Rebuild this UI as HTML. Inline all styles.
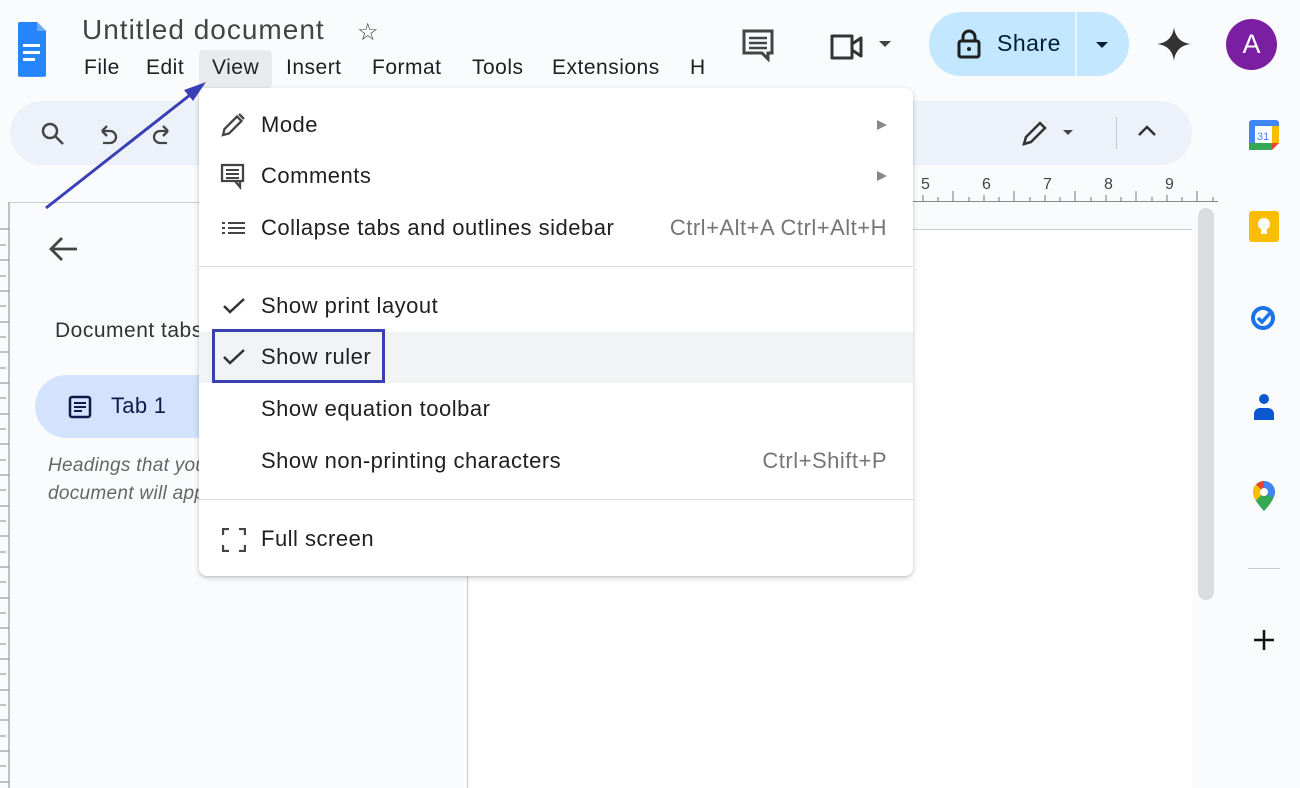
<!DOCTYPE html>
<html><head><meta charset="utf-8"><style>
*{box-sizing:border-box;margin:0;padding:0}
body{width:1300px;height:788px;overflow:hidden;background:#f9fbfd;font-family:"Liberation Sans",Arial,sans-serif;color:#1f1f1f;position:relative}
.a{position:absolute}
.menu span{position:absolute;top:56px;font-size:21px;color:#1f1f1f;letter-spacing:.5px}
.mi{position:absolute;left:261px;font-size:22px;letter-spacing:.5px;color:#1f1f1f}
.sc{position:absolute;right:413px;font-size:22px;letter-spacing:.5px;color:#757575}
</style></head><body>
<!-- docs logo -->
<svg class="a" style="left:17px;top:20px" width="30" height="58" viewBox="0 0 30 58"><path d="M3 2h17l9 9v45a2 2 0 0 1-2 2H3a2 2 0 0 1-2-2V4a2 2 0 0 1 2-2z" fill="#2684fc" transform="scale(1,0.98)"/><path d="M20 2v9h9z" fill="#6aa9fd"/><rect x="6" y="24" width="17" height="3" fill="#fff"/><rect x="6" y="31" width="17" height="3" fill="#fff"/><rect x="6" y="38" width="12" height="3" fill="#fff"/></svg>
<div class="a" style="left:82px;top:14px;font-size:28px;letter-spacing:1px;color:#444">Untitled document</div>
<div class="a" style="left:357px;top:18px;font-size:24px;color:#444">☆</div>
<div class="a" style="left:199px;top:50px;width:73px;height:38px;background:#e8eaed;border-radius:4px"></div>
<div class="menu"><span style="left:84px">File</span><span style="left:146px">Edit</span><span style="left:212px">View</span><span style="left:286px">Insert</span><span style="left:372px">Format</span><span style="left:472px">Tools</span><span style="left:552px">Extensions</span><span style="left:690px">H</span></div>
<!-- top right icons -->
<svg class="a" style="left:741px;top:28px" width="36" height="34" viewBox="0 0 36 34"><path d="M3 3h28v22h-4v6l-6-6H3z" fill="none" stroke="#444" stroke-width="3"/><path d="M8 10h18M8 15h18M8 20h18" stroke="#444" stroke-width="2.5"/></svg>
<svg class="a" style="left:828px;top:30px" width="70" height="32" viewBox="0 0 70 32"><path d="M4 6h20v22H4z M24 14l9-6v18l-9-6" fill="none" stroke="#333" stroke-width="3" stroke-linejoin="round"/><path d="M51 11h12l-6 6z" fill="#444"/></svg>
<div class="a" style="left:929px;top:12px;width:200px;height:64px;background:#c2e7ff;border-radius:32px"></div>
<div class="a" style="left:1075px;top:12px;width:2px;height:64px;background:#e6f4ff"></div>
<svg class="a" style="left:956px;top:29px" width="26" height="30" viewBox="0 0 26 30"><rect x="3" y="12" width="20" height="16" rx="2" fill="none" stroke="#1f1f1f" stroke-width="3"/><path d="M7 12V8a6 6 0 0 1 12 0v4" fill="none" stroke="#1f1f1f" stroke-width="3"/><circle cx="13" cy="20" r="2" fill="#1f1f1f"/></svg>
<div class="a" style="left:997px;top:30px;font-size:23px;letter-spacing:.5px;color:#001d35">Share</div>
<svg class="a" style="left:1094px;top:40px" width="16" height="10"><path d="M2 2h12l-6 6z" fill="#001d35"/></svg>
<svg class="a" style="left:1156px;top:26px" width="36" height="36" viewBox="0 0 36 36"><path d="M18 1C19 11 25 17 35 18 25 19 19 25 18 35 17 25 11 19 1 18 11 17 17 11 18 1z" fill="#333"/></svg>
<div class="a" style="left:1226px;top:19px;width:51px;height:51px;border-radius:50%;background:#7b1fa2;color:#fff;font-size:27px;text-align:center;line-height:51px">A</div>
<!-- toolbar -->
<div class="a" style="left:10px;top:101px;width:1182px;height:64px;background:#edf2fa;border-radius:32px"></div>
<svg class="a" style="left:40px;top:121px" width="140" height="28" viewBox="0 0 140 28"><circle cx="10" cy="10" r="7" fill="none" stroke="#444" stroke-width="2.5"/><path d="M15 15l8 8" stroke="#444" stroke-width="2.5"/><path d="M62 10h8a6 6 0 0 1 0 12h-7M62 10l5-5M62 10l5 5" fill="none" stroke="#444" stroke-width="2.3"/><path d="M128 10h-8a6 6 0 0 0 0 12h7M128 10l-5-5M128 10l-5 5" fill="none" stroke="#444" stroke-width="2.3"/></svg>
<svg class="a" style="left:1020px;top:118px" width="60" height="30" viewBox="0 0 60 30"><path d="M4 26l2-7L20 5l5 5L11 24z" fill="none" stroke="#333" stroke-width="2.5"/><path d="M43 12h10l-5 5z" fill="#444"/></svg>
<div class="a" style="left:1116px;top:117px;width:1px;height:32px;background:#c4c7c5"></div>
<svg class="a" style="left:1137px;top:124px" width="20" height="14"><path d="M2 11l8-8 8 8" fill="none" stroke="#333" stroke-width="2.5"/></svg>
<!-- ruler -->
<div class="a" style="left:912px;top:201px;width:306px;height:1px;background:#888"></div>
<div class="a" style="left:912px;top:176px;width:306px;height:26px;font-size:16px;color:#444">
<span class="a" style="left:9px;top:0">5</span><span class="a" style="left:70px;top:0">6</span><span class="a" style="left:131px;top:0">7</span><span class="a" style="left:192px;top:0">8</span><span class="a" style="left:253px;top:0">9</span>
<svg class="a" style="left:0;top:0" width="306" height="26"><g stroke="#777" stroke-width="1">
<path d="M11 19v6M26 21v4M41 15v10M57 21v4M72 19v6M87 21v4M102 15v10M118 21v4M133 19v6M148 21v4M163 15v10M179 21v4M194 19v6M209 21v4M224 15v10M240 21v4M255 19v6M270 21v4M285 15v10M301 21v4"/></g></svg></div>
<!-- left vertical ruler -->
<svg class="a" style="left:0;top:202px" width="10" height="586"><g stroke="#888"><path d="M9 0v586"/>
<path d="M0 27h9M0 43h6M0 58h9M0 74h6M0 89h9M0 104h6M0 120h9M0 135h6M0 150h9M0 166h6M0 181h9M0 196h6M0 212h9M0 227h6M0 242h9M0 258h6M0 273h9M0 288h6M0 304h9M0 319h6M0 334h9M0 350h6M0 365h9M0 380h6M0 396h9M0 411h6M0 426h9M0 442h6M0 457h9M0 472h6M0 488h9M0 503h6M0 518h9M0 534h6M0 549h9M0 564h6M0 580h9"/></g></svg>
<!-- left panel -->
<div class="a" style="left:9px;top:202px;width:460px;height:1px;background:#ccc"></div>
<div class="a" style="left:467px;top:202px;width:1px;height:586px;background:#ccc"></div>
<svg class="a" style="left:48px;top:235px" width="32" height="28"><path d="M29 14H4M14 3L3 14l11 11" fill="none" stroke="#444" stroke-width="2.8"/></svg>
<div class="a" style="left:55px;top:319px;font-size:21px;letter-spacing:.5px;color:#333">Document tabs</div>
<div class="a" style="left:35px;top:375px;width:400px;height:63px;background:#d3e3fd;border-radius:32px"></div>
<svg class="a" style="left:68px;top:395px" width="24" height="24"><rect x="2" y="2" width="20" height="20" rx="2" fill="none" stroke="#0b1b4a" stroke-width="2.5"/><path d="M6 8h12M6 12h12M6 16h8" stroke="#0b1b4a" stroke-width="2"/></svg>
<div class="a" style="left:111px;top:393px;font-size:22px;letter-spacing:.3px;color:#0b1b4a">Tab 1</div>
<div class="a" style="left:48px;top:452px;font-size:19px;letter-spacing:.3px;color:#666;font-style:italic;line-height:28px">Headings that you add to the<br>document will appear here.</div>
<!-- doc page -->
<div class="a" style="left:469px;top:229px;width:723px;height:559px;background:#fff;border-top:1px solid #ccc"></div>
<div class="a" style="left:1198px;top:208px;width:16px;height:392px;background:#dadce0;border-radius:8px"></div>
<!-- right side panel -->
<svg class="a" style="left:1248px;top:119px" width="32" height="32" viewBox="0 0 32 32"><rect x="1" y="1" width="30" height="30" rx="3" fill="#fff"/><path d="M1 4a3 3 0 0 1 3-3h24a3 3 0 0 1 3 3v3H1z" fill="#4285f4"/><rect x="1" y="24" width="23" height="7" fill="#34a853"/><rect x="24" y="7" width="7" height="17" fill="#fbbc04"/><path d="M24 24h7l-7 7z" fill="#ea4335"/><rect x="1" y="4" width="6" height="20" fill="#4285f4"/><rect x="7" y="7" width="17" height="17" fill="#fff"/><text x="9" y="21" font-size="11" fill="#4285f4" font-family="Liberation Sans">31</text></svg>
<svg class="a" style="left:1248px;top:210px" width="32" height="32"><rect x="1" y="1" width="30" height="31" rx="3" fill="#fbbc04"/><circle cx="16" cy="14" r="6" fill="#fff"/><rect x="13" y="20" width="6" height="4" fill="#fff"/></svg>
<svg class="a" style="left:1249px;top:302px" width="30" height="30"><circle cx="14" cy="16" r="10" fill="none" stroke="#1a73e8" stroke-width="4"/><path d="M9 16l4 4 9-10" fill="none" stroke="#1a73e8" stroke-width="3.5"/></svg>
<svg class="a" style="left:1251px;top:392px" width="26" height="30"><circle cx="13" cy="7" r="5" fill="#0b57d0"/><path d="M3 28v-6a6 6 0 0 1 6-6h8a6 6 0 0 1 6 6v6z" fill="#0b57d0"/></svg>
<svg class="a" style="left:1252px;top:480px" width="24" height="32" viewBox="0 0 24 32"><path d="M12 1a11 11 0 0 0-11 11c0 8 11 19 11 19s11-11 11-19A11 11 0 0 0 12 1z" fill="#34a853"/><path d="M12 1a11 11 0 0 0-8 3.5l8 8z" fill="#ea4335"/><path d="M4 4.5A11 11 0 0 0 1 12c0 3 1.5 6 3 8.5l8-8z" fill="#fbbc04"/><path d="M12 1a11 11 0 0 1 11 11c0 2-1 4-2 6L12 12.5z" fill="#4285f4"/><circle cx="12" cy="12" r="4" fill="#fff"/></svg>
<div class="a" style="left:1248px;top:568px;width:32px;height:1px;background:#ccc"></div>
<svg class="a" style="left:1253px;top:629px" width="22" height="22"><path d="M11 1v20M1 11h20" stroke="#111" stroke-width="2.5"/></svg>
<!-- dropdown menu -->
<div class="a" style="left:199px;top:88px;width:714px;height:488px;background:#fff;border-radius:0 8px 8px 8px;box-shadow:0 2px 6px rgba(0,0,0,.18),0 1px 2px rgba(0,0,0,.1)"></div>
<div class="a" style="left:199px;top:266px;width:714px;height:1px;background:#dadce0"></div>
<div class="a" style="left:199px;top:499px;width:714px;height:1px;background:#dadce0"></div>
<div class="a" style="left:199px;top:332px;width:714px;height:51px;background:#f1f3f4"></div>
<svg class="a" style="left:220px;top:112px" width="26" height="26"><path d="M3 23l1.5-6L17 4.5l4.5 4.5L9 21.5z" fill="none" stroke="#444" stroke-width="2.3"/><path d="M19 2l5 5" stroke="#444" stroke-width="2.3"/></svg>
<div class="mi" style="top:112px">Mode</div>
<svg class="a" style="left:876px;top:119px" width="12" height="12"><path d="M1 1l10 5-10 5z" fill="#888"/></svg>
<svg class="a" style="left:220px;top:163px" width="26" height="28"><path d="M2 2h21v16H2z M20 18v6l-5-6" fill="none" stroke="#444" stroke-width="2.3"/><path d="M6 7h13M6 11h13M6 15h13" stroke="#444" stroke-width="2"/></svg>
<div class="mi" style="top:163px">Comments</div>
<svg class="a" style="left:876px;top:170px" width="12" height="12"><path d="M1 1l10 5-10 5z" fill="#888"/></svg>
<svg class="a" style="left:222px;top:221px" width="24" height="14"><path d="M0 2h3M6 2h17M0 7h3M6 7h17M0 12h3M6 12h17" stroke="#444" stroke-width="2"/></svg>
<div class="mi" style="top:215px">Collapse tabs and outlines sidebar</div>
<div class="sc" style="top:215px">Ctrl+Alt+A Ctrl+Alt+H</div>
<svg class="a" style="left:222px;top:297px" width="24" height="18"><path d="M2 9l6 6L22 2" fill="none" stroke="#333" stroke-width="2.5"/></svg>
<div class="mi" style="top:293px">Show print layout</div>
<svg class="a" style="left:222px;top:348px" width="24" height="18"><path d="M2 9l6 6L22 2" fill="none" stroke="#333" stroke-width="2.5"/></svg>
<div class="mi" style="top:344px">Show ruler</div>
<div class="a" style="left:212px;top:329px;width:173px;height:54px;border:3px solid #3b3fb6"></div>
<div class="mi" style="top:396px">Show equation toolbar</div>
<div class="mi" style="top:448px">Show non-printing characters</div>
<div class="sc" style="top:448px">Ctrl+Shift+P</div>
<svg class="a" style="left:222px;top:528px" width="24" height="24"><path d="M1 7V1h6M17 1h6v6M23 17v6h-6M7 23H1v-6" fill="none" stroke="#444" stroke-width="2.3"/></svg>
<div class="mi" style="top:526px">Full screen</div>
<!-- arrow -->
<svg class="a" style="left:0;top:0" width="300" height="260"><path d="M46 208L190 95" stroke="#3b3fb6" stroke-width="3"/><path d="M206 82L184 90l9 11z" fill="#3b3fb6"/></svg>
</body></html>
